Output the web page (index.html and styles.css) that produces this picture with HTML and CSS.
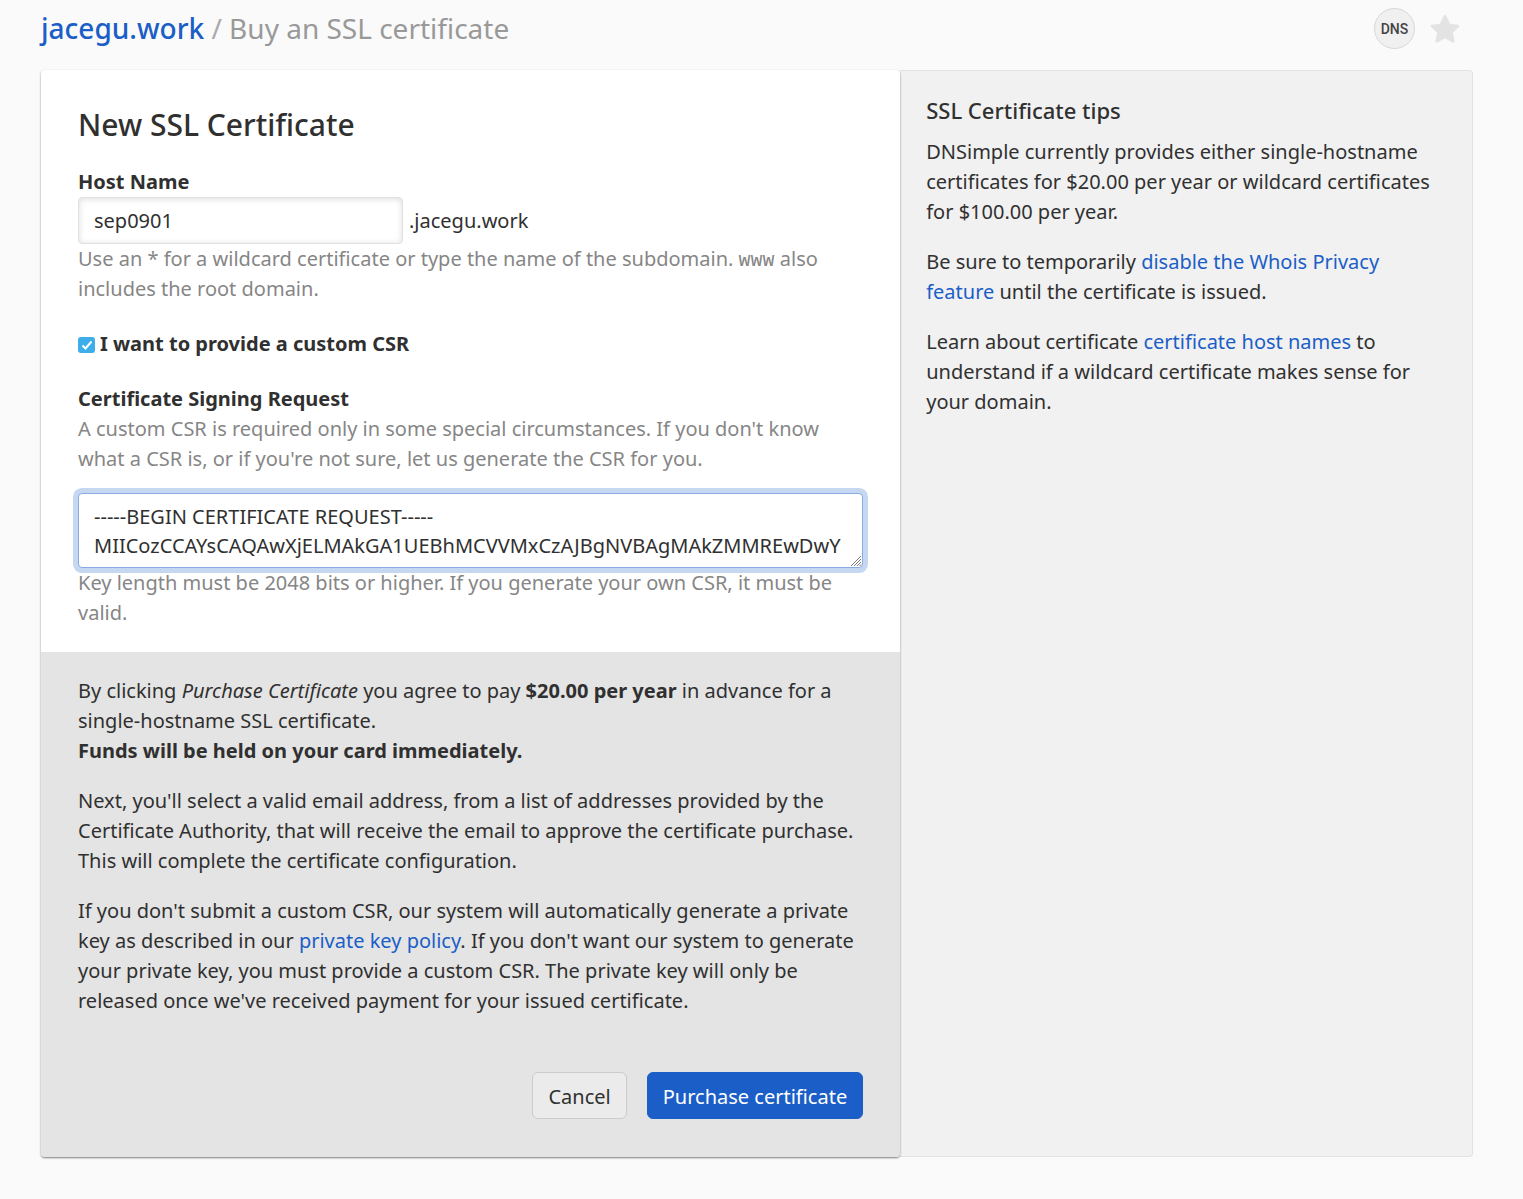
FILE: index.html
```html
<!DOCTYPE html>
<html lang="en">
<head>
<meta charset="utf-8">
<meta name="viewport" content="width=device-width, initial-scale=1">
<title>Buy an SSL certificate</title>
<link rel="stylesheet" href="styles.css">
</head>
<body>
<header class="page-header">
  <h1 class="breadcrumb"><a class="domain" href="#">jacegu.work</a> <span class="separator">/</span> Buy an SSL certificate</h1>
  <div class="header-tools">
    <button class="dns-badge" type="button">DNS</button>
    <button class="star" type="button" aria-label="Add to favorites">
      <svg width="30" height="28" viewBox="0 0 30 28" aria-hidden="true"><path d="M13.4 1.2Q15 -1 16.6 1.2L20 8.7L28.200 9.700Q30.300 10.300 28.900 12.100L22.900 17.700L24.600 25.900Q24.600 28.200 22.400 27.400L15 23.300L7.600 27.400Q5.400 28.200 5.400 25.900L7.100 17.700L1.100 12.100Q-.3 10.300 1.800 9.700L10 8.700Z" fill="#e3e3e3"/></svg>
    </button>
  </div>
</header>
<main class="layout">
  <form class="card">
    <div class="fields">
      <h2 class="title">New SSL Certificate</h2>
      <div class="field">
        <label class="label" for="host">Host Name</label>
        <div class="host-row"><input class="input" id="host" type="text" value="sep0901"><span>.jacegu.work</span></div>
        <p class="help">Use an * for a wildcard certificate or type the name of the subdomain. <code>www</code> also includes the root domain.</p>
      </div>
      <div class="check-row"><input class="checkbox" id="custom" type="checkbox" checked><label class="label" for="custom">I want to provide a custom CSR</label></div>
      <div class="field">
        <label class="label" for="csr">Certificate Signing Request</label>
        <p class="help">A custom CSR is required only in some special circumstances. If you don't know what a CSR is, or if you're not sure, let us generate the CSR for you.</p>
        <textarea class="input textarea" id="csr" rows="2" spellcheck="false">-----BEGIN CERTIFICATE REQUEST-----
MIICozCCAYsCAQAwXjELMAkGA1UEBhMCVVMxCzAJBgNVBAgMAkZMMREwDwY</textarea>
        <p class="help">Key length must be 2048 bits or higher. If you generate your own CSR, it must be valid.</p>
      </div>
    </div>
    <div class="agreement">
      <p>By clicking <em>Purchase Certificate</em> you agree to pay <strong>$20.00 per year</strong> in advance for a single-hostname SSL certificate.<br><strong>Funds will be held on your card immediately.</strong></p>
      <p>Next, you'll select a valid email address, from a list of addresses provided by the Certificate Authority, that will receive the email to approve the certificate purchase. This will complete the certificate configuration.</p>
      <p>If you don't submit a custom CSR, our system will automatically generate a private key as described in our <a href="#">private key policy</a>. If you don't want our system to generate your private key, you must provide a custom CSR. The private key will only be released once we've received payment for your issued certificate.</p>
      <div class="actions">
        <button class="button" type="button">Cancel</button>
        <button class="button primary" type="submit">Purchase certificate</button>
      </div>
    </div>
  </form>
  <aside class="tips">
    <h3 class="tips-title">SSL Certificate tips</h3>
    <p>DNSimple currently provides either single-hostname certificates for $20.00 per year or wildcard certificates for $100.00 per year.</p>
    <p>Be sure to temporarily <a href="#">disable the Whois Privacy feature</a> until the certificate is issued.</p>
    <p>Learn about certificate <a href="#">certificate host names</a> to understand if a wildcard certificate makes sense for your domain.</p>
  </aside>
</main>
</body>
</html>
```
FILE: styles.css
```css
* { box-sizing: border-box; }

body {
  margin: 0;
  padding: 0 50px 40px 41px;
  background: #fafafa;
  color: #303030;
  font: 20px/30px "Noto Sans", sans-serif;
}

a { color: #1b5ec7; text-decoration: none; }
p { margin: 0 0 20px; }
button, input, textarea { font: inherit; color: inherit; }

.page-header {
  display: flex;
  justify-content: space-between;
  align-items: flex-start;
  height: 70px;
  padding: 8px 13px 0 0;
}
.breadcrumb { margin: 0; font-size: 28px; line-height: 40px; font-weight: 400; color: #999; }
.domain { font-weight: 500; }
.separator { color: #aaa; }
.header-tools { display: flex; align-items: center; gap: 15px; }
.dns-badge {
  width: 41px;
  height: 41px;
  padding: 0;
  border: 1px solid #d8d8d8;
  border-radius: 50%;
  background: #f0f0f0;
  color: #444;
  font: 500 14px/40px Roboto, sans-serif;
}
.star { display: flex; padding: 0; border: 0; background: none; }

.layout { display: grid; grid-template-columns: 3fr 2fr; }
.card {
  position: relative;
  background: #fff;
  border-radius: 4px;
  box-shadow: 0 1px 2px rgba(0, 0, 0, .5);
}
.fields { padding: 36px 37px 24px; }
.title { margin: 0 0 23px; font-size: 30px; line-height: 38px; font-weight: 500; }
.label { display: block; font-weight: 700; }
.help { margin: 0; color: #868686; }
.help code { font: 20px/20px "Noto Sans Mono", "DejaVu Sans Mono", monospace; }
.input {
  display: block;
  border: 1px solid #e0e0e0;
  border-radius: 4px;
  padding: 8px 15px;
  background: #fff;
}
.host-row { display: flex; align-items: center; gap: 6px; }
.host-row .input { width: 325px; height: 47px; box-shadow: inset 0 1px 6px rgba(0, 0, 0, .14); }
.check-row { display: flex; align-items: center; gap: 5px; margin: 25px 0; }
.checkbox {
  appearance: none;
  width: 17px;
  height: 16px;
  margin: 2px 0 0;
  border-radius: 3px;
  background: #3daee9 url("data:image/svg+xml,%3Csvg xmlns='http://www.w3.org/2000/svg' viewBox='0 0 16 16'%3E%3Cpath d='M3.500 8.500l3 3 6-7' fill='none' stroke='white' stroke-width='2'/%3E%3C/svg%3E") center no-repeat;
}
.textarea {
  width: 100%;
  height: 75px;
  margin: 19px 0 0;
  border-color: #8aabe2;
  line-height: 29px;
  overflow: hidden;
  resize: vertical;
  outline: 0;
  box-shadow: 0 0 0 5px #c6d7f1;
}
.textarea::-webkit-resizer {
  background: url("data:image/svg+xml,%3Csvg xmlns='http://www.w3.org/2000/svg' viewBox='0 0 15 15'%3E%3Cpath d='M4 14L14 4M7 14L14 7M10 14L14 10M12.500 14L14 12.500' stroke='%23777'/%3E%3C/svg%3E") no-repeat;
}

.agreement {
  padding: 24px 37px 38px;
  border-radius: 0 0 4px 4px;
  background: #e4e4e4;
}
.actions { display: flex; justify-content: flex-end; gap: 20px; margin-top: 56px; }
.button {
  height: 47px;
  padding: 2px 15px 0;
  border: 1px solid #cbcbcb;
  border-radius: 6px;
  background: #ebebeb;
}
.primary { border-color: #1b5ec7; background: #1b5ec7; color: #fff; }

.tips {
  padding: 24px 25px 24px 26px;
  border: 1px solid #e2e2e2;
  border-left: 0;
  border-radius: 0 4px 4px 0;
  background: #f1f1f1;
}
.tips-title { margin: 0 0 12px; font-size: 22px; line-height: 30px; font-weight: 500; }
```
